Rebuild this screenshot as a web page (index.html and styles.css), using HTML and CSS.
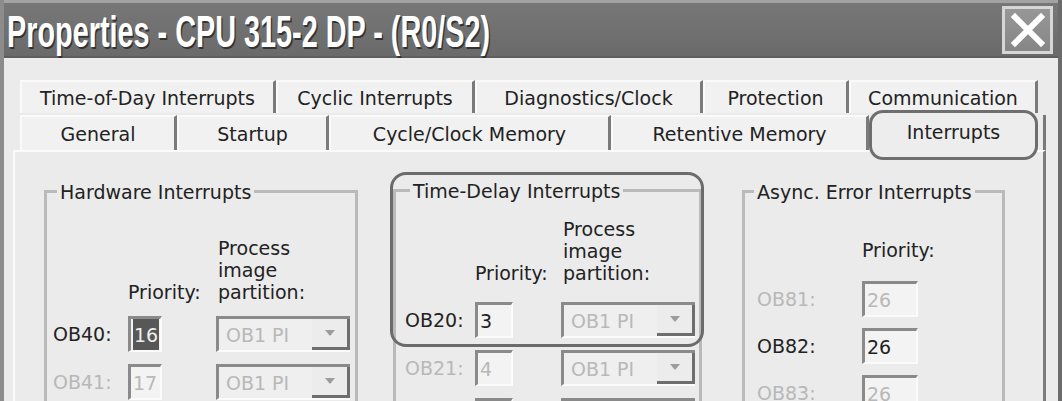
FILE: index.html
```html
<!DOCTYPE html>
<html lang="en">
<head>
    <meta charset="UTF-8">
    <title>Properties - CPU 315-2 DP - (R0/S2)</title>
    <link rel="stylesheet" href="styles.css">
</head>
<body>
    <div class="window">
        <div class="titlebar">
            <span class="title">Properties - CPU 315-2 DP - (R0/S2)</span>
            <div class="close">
                <svg width="34" height="34" viewBox="0 0 34 34">
                    <path d="M4 4 L30 30 M30 4 L4 30" stroke="#fff" stroke-width="6" stroke-linecap="square"/>
                </svg>
            </div>
        </div>

        <div class="dialog">
            <div class="tab-row row-back">
                <div class="tab t-tod">Time-of-Day Interrupts</div>
                <div class="tab t-cyc">Cyclic Interrupts</div>
                <div class="tab t-diag">Diagnostics/Clock</div>
                <div class="tab t-prot">Protection</div>
                <div class="tab t-comm">Communication</div>
            </div>
            <div class="tab-row row-front">
                <div class="tab t-gen">General</div>
                <div class="tab t-start">Startup</div>
                <div class="tab t-ccm">Cycle/Clock Memory</div>
                <div class="tab t-ret">Retentive Memory</div>
                <div class="tab active t-int">Interrupts</div>
            </div>

            <div class="panel">
                <!-- Hardware Interrupts -->
                <div class="group hw">
                    <div class="group-title">Hardware Interrupts</div>
                    <div class="ob-grid">
                        <div class="head"></div>
                        <div class="head prio">Priority:</div>
                        <div class="head pip">Process<br>image<br>partition:</div>

                        <div class="ob">OB40:</div>
                        <div class="field"><span class="sel">16</span></div>
                        <div class="combo off"><span class="combo-text">OB1 PI</span><span class="combo-btn"><i class="arrow"></i></span></div>

                        <div class="ob off">OB41:</div>
                        <div class="field off">17</div>
                        <div class="combo off"><span class="combo-text">OB1 PI</span><span class="combo-btn"><i class="arrow"></i></span></div>
                    </div>
                </div>

                <!-- Time-Delay Interrupts -->
                <div class="group td">
                    <div class="mark"></div>
                    <div class="group-title">Time-Delay Interrupts</div>
                    <div class="ob-grid">
                        <div class="head"></div>
                        <div class="head prio">Priority:</div>
                        <div class="head pip">Process<br>image<br>partition:</div>

                        <div class="ob">OB20:</div>
                        <div class="field">3</div>
                        <div class="combo off"><span class="combo-text">OB1 PI</span><span class="combo-btn"><i class="arrow"></i></span></div>

                        <div class="ob off">OB21:</div>
                        <div class="field off">4</div>
                        <div class="combo off"><span class="combo-text">OB1 PI</span><span class="combo-btn"><i class="arrow"></i></span></div>

                        <div class="ob"></div>
                        <div class="field off"></div>
                        <div class="combo off"><span class="combo-text"></span><span class="combo-btn"></span></div>
                    </div>
                </div>

                <!-- Async. Error Interrupts -->
                <div class="group ae">
                    <div class="group-title">Async. Error Interrupts</div>
                    <div class="ob-grid">
                        <div class="head"></div>
                        <div class="head prio">Priority:</div>

                        <div class="ob off">OB81:</div>
                        <div class="field off">26</div>

                        <div class="ob">OB82:</div>
                        <div class="field">26</div>

                        <div class="ob off">OB83:</div>
                        <div class="field off">26</div>
                    </div>
                </div>
            </div>
        </div>
    </div>
</body>
</html>
```

FILE: styles.css
```css
* {
    box-sizing: border-box;
}
body {
    margin: 0;
    width: 1062px;
    height: 401px;
    overflow: hidden;
    background: #ebebeb;
    font-family: "DejaVu Sans", Verdana, sans-serif;
    font-size: 19px;
    color: #222;
}
.window {
    height: 401px;
    border-left: 4px solid #8c8c8c;
    border-right: 4px solid #6b6b6b;
}

/* title bar */
.titlebar {
    height: 58px;
    border-top: 3px solid #a3a3a3;
    border-bottom: 2px solid #5e5e5e;
    background: linear-gradient(#777, #6a6a6a);
    display: flex;
    align-items: center;
    justify-content: space-between;
    padding: 0 5px 0 3px;
}
.title {
    font-family: "Liberation Sans", Arial, sans-serif;
    font-weight: bold;
    font-size: 44px;
    line-height: 1;
    color: #fff;
    text-shadow: 2px 2px 0 #333;
    white-space: nowrap;
    margin-top: 4px;
    transform: scaleX(0.655);
    transform-origin: left center;
}
.close {
    width: 51px;
    height: 48px;
    border: 3px solid #d6d6d6;
    background: linear-gradient(#979797, #868686);
    display: flex;
    align-items: center;
    justify-content: center;
}

/* tabs */
.dialog {
    padding: 22px 0 0 9px;
}
.tab-row {
    display: flex;
    margin-left: 7px;
}
.row-back {
    height: 33px;
}
.row-front {
    height: 35px;
    margin-top: 2px;
    width: 1026px;
    border-right: 3px solid #787878;
}
.tab {
    display: flex;
    align-items: center;
    justify-content: center;
    white-space: nowrap;
    background: #f1f1f1;
    border-top: 2px solid #fafafa;
    border-left: 2px solid #fafafa;
    border-right: 3px solid #7a7a7a;
}
.t-tod { width: 256px; }
.t-cyc { width: 199px; }
.t-diag { width: 228px; }
.t-prot { width: 146px; }
.t-comm { width: 189px; }
.t-gen { width: 157px; }
.t-start { width: 152px; }
.t-ccm { width: 282px; }
.t-ret { width: 258px; }
.t-int { width: 169px; }
.tab.active {
    position: relative;
    z-index: 1;
    margin: -5px 0 -10px;
    border: 3px solid #6e6e6e;
    border-radius: 14px;
    background: #ededed;
    align-items: flex-start;
    padding-top: 8px;
}

/* page */
.panel {
    width: 1033px;
    height: 260px;
    border-top: 2px solid #fbfbfb;
    border-left: 2px solid #fbfbfb;
    border-right: 3px solid #7c7c7c;
    display: flex;
    align-items: flex-start;
    padding-top: 38px;
}
.group {
    border: 3px solid #bababa;
    height: 260px;
}
.group-title {
    width: fit-content;
    margin-top: -12px;
    padding: 0 3px;
    line-height: 22px;
    background: #ebebeb;
}
.ob-grid {
    display: grid;
    row-gap: 12px;
    align-items: center;
    line-height: 22px;
}
.prio {
    align-self: end;
    white-space: nowrap;
}
.pip {
    padding-left: 2px;
}

.hw {
    width: 314px;
    margin-left: 29px;
}
.hw .group-title { margin-left: 10px; }
.hw .ob-grid {
    grid-template-columns: 75px 88px 134px;
    margin: 34px 0 0 6px;
}
.hw .head { margin-bottom: 1px; }
.hw .field { width: 34px; }

.td {
    position: relative;
    width: 309px;
    margin: -1px 0 0 35px;
}
.td .group-title { margin-left: 14px; }
.td .ob-grid {
    grid-template-columns: 70px 86px 134px;
    margin: 16px 0 0 9px;
}
.td .head { margin-bottom: 6px; }
.td .field { width: 38px; }
.mark {
    position: absolute;
    top: -20px;
    left: -6px;
    width: 314px;
    height: 175px;
    border: 3px solid #6b6b6b;
    border-radius: 16px;
}

.ae {
    width: 263px;
    margin-left: 40px;
}
.ae .group-title { margin-left: 9px; }
.ae .ob-grid {
    grid-template-columns: 105px 56px;
    margin: 36px 0 0 12px;
    row-gap: 11px;
}
.ae .head { margin-bottom: 9px; }
.ae .field { width: 56px; }

/* controls */
.ob {
    white-space: nowrap;
}
.off {
    color: #b8b8b8;
}
.field {
    height: 36px;
    display: flex;
    align-items: center;
    padding-left: 2px;
    background: #f3f3f3;
    border-top: 3px solid #8a8a8a;
    border-left: 3px solid #8a8a8a;
    border-right: 2px solid #fbfbfb;
    border-bottom: 2px solid #fbfbfb;
}
.sel {
    height: 100%;
    display: flex;
    align-items: center;
    padding: 0 1px;
    background: #575757;
    color: #eee;
}
.combo {
    height: 36px;
    display: flex;
    background: #efefef;
    border-top: 3px solid #8a8a8a;
    border-left: 3px solid #8a8a8a;
    border-bottom: 2px solid #fbfbfb;
}
.combo-text {
    flex: 1;
    display: flex;
    align-items: center;
    padding-left: 7px;
}
.combo-btn {
    width: 38px;
    display: flex;
    align-items: center;
    justify-content: center;
    background: #ececec;
    border-right: 3px solid #6e6e6e;
    border-bottom: 3px solid #6e6e6e;
}
.arrow {
    width: 0;
    height: 0;
    border-top: 6px solid #9c9c9c;
    border-left: 5px solid transparent;
    border-right: 5px solid transparent;
}
```
